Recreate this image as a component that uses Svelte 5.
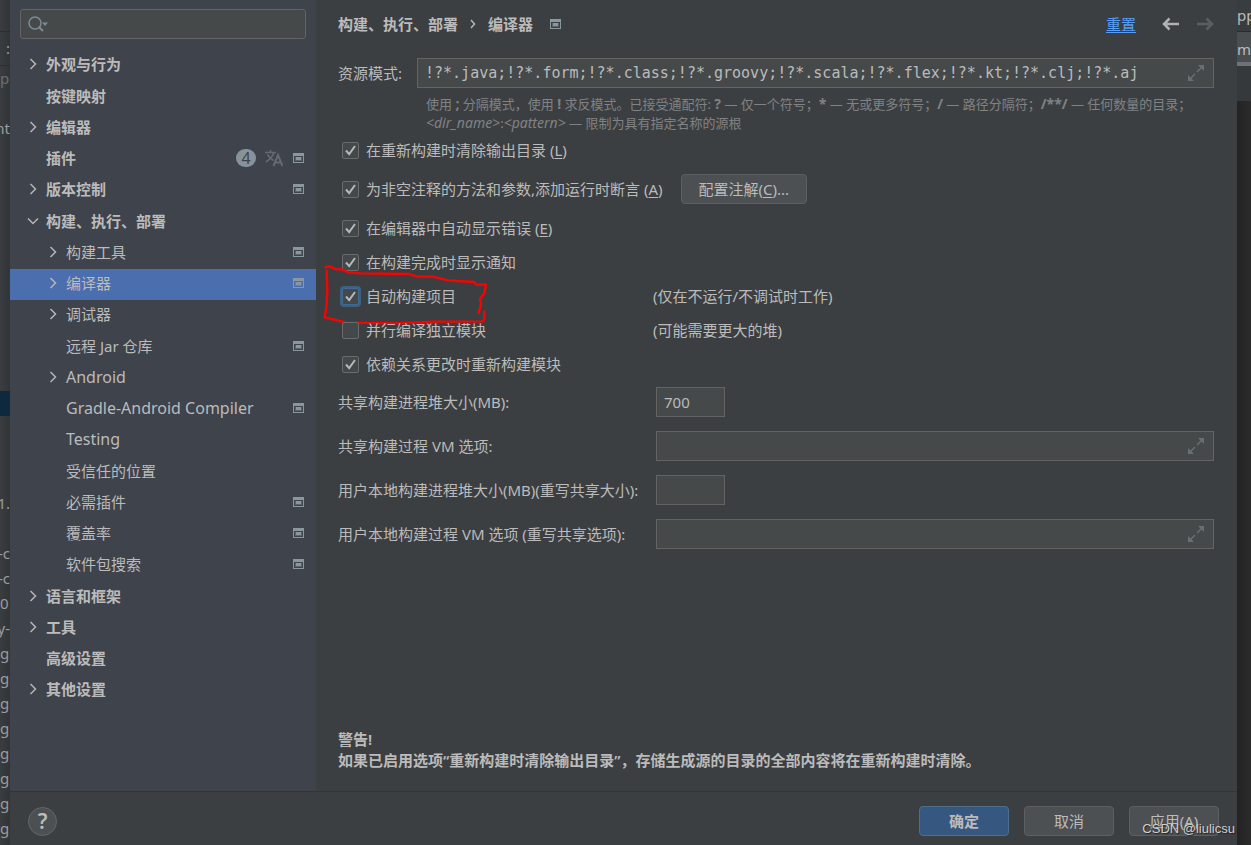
<script lang="ts">
	interface TreeItem {
		label: string;
		level?: number;
		arrow?: 'right' | 'down';
		project?: boolean;
		updates?: number;
		latin?: boolean;
	}

	const tree: TreeItem[] = [
		{ label: '外观与行为', arrow: 'right' },
		{ label: '按键映射' },
		{ label: '编辑器', arrow: 'right' },
		{ label: '插件', project: true, updates: 4 },
		{ label: '版本控制', arrow: 'right', project: true },
		{ label: '构建、执行、部署', arrow: 'down' },
		{ label: '构建工具', level: 1, arrow: 'right', project: true },
		{ label: '编译器', level: 1, arrow: 'right', project: true },
		{ label: '调试器', level: 1, arrow: 'right' },
		{ label: '远程 Jar 仓库', level: 1, project: true },
		{ label: 'Android', level: 1, arrow: 'right', latin: true },
		{ label: 'Gradle-Android Compiler', level: 1, project: true, latin: true },
		{ label: 'Testing', level: 1, latin: true },
		{ label: '受信任的位置', level: 1 },
		{ label: '必需插件', level: 1, project: true },
		{ label: '覆盖率', level: 1, project: true },
		{ label: '软件包搜索', level: 1, project: true },
		{ label: '语言和框架', arrow: 'right' },
		{ label: '工具', arrow: 'right' },
		{ label: '高级设置' },
		{ label: '其他设置', arrow: 'right' }
	];

	let selected = $state('编译器');

	let options = $state([
		{ id: 'clear-output', label: '在重新构建时清除输出目录', key: 'L', checked: true },
		{ id: 'assertions', label: '为非空注释的方法和参数,添加运行时断言', key: 'A', checked: true, configure: true },
		{ id: 'show-errors', label: '在编辑器中自动显示错误', key: 'E', checked: true },
		{ id: 'notify', label: '在构建完成时显示通知', checked: true },
		{ id: 'auto-build', label: '自动构建项目', checked: true, focused: true, note: '(仅在不运行/不调试时工作)' },
		{ id: 'parallel', label: '并行编译独立模块', checked: false, note: '(可能需要更大的堆)' },
		{ id: 'rebuild-deps', label: '依赖关系更改时重新构建模块', checked: true }
	]);

	let fields = $state([
		{ id: 'shared-heap', label: '共享构建进程堆大小(MB):', value: '700', wide: false },
		{ id: 'shared-vm', label: '共享构建过程 VM 选项:', value: '', wide: true },
		{ id: 'user-heap', label: '用户本地构建进程堆大小(MB)(重写共享大小):', value: '', wide: false },
		{ id: 'user-vm', label: '用户本地构建过程 VM 选项 (重写共享选项):', value: '', wide: true }
	]);

	let patterns = $state(
		'!?*.java;!?*.form;!?*.class;!?*.groovy;!?*.scala;!?*.flex;!?*.kt;!?*.clj;!?*.aj'
	);

	// Ends of the editor lines that stick out left of the dialog
	const editorLines = [
		'pl', '', 'nt', '', '', '', '', '', '', '', '', '', '', '', '', '', '', '1.', '',
		'-c', '-c', '0', 'y-', 'g', 'g', 'g', 'g', 'g', 'g', 'g', 'g'
	];
	const currentLine = 13;
</script>

{#snippet projectIcon()}
	<svg class="project-icon" width="11" height="10" viewBox="0 0 11 10">
		<path d="M0 0h11v10H0zM1 3v6h9V3z" fill="currentColor" fill-rule="evenodd" />
		<rect x="2" y="4" width="7" height="4" fill="currentColor" opacity="0.4" />
		<rect x="3" y="4" width="5" height="3" fill="currentColor" />
	</svg>
{/snippet}

{#snippet expandButton()}
	<button class="expand" aria-label="展开">
		<svg width="16" height="16" viewBox="0 0 16 16">
			<path d="M10 0h6v6zM0 10v6h6z" fill="currentColor" />
			<path d="M9 7l5-5M7 9l-5 5" stroke="currentColor" stroke-width="1.500" />
		</svg>
	</button>
{/snippet}

<div class="screen">
	<div class="editor-left">
		<div class="toolbar-edge"></div>
		<div class="tab-edge">:</div>
		{#each editorLines as line, i}
			<div
				class="code-line"
				class:current={i === currentLine}
				class:dim={i === 0}
				class:start={line.length === 1 || i === 0}
			>
				{line}
			</div>
		{/each}
	</div>

	<div class="dialog">
		<div class="body">
			<aside class="sidebar">
				<div class="search">
					<svg width="22" height="18" viewBox="0 0 22 18">
						<circle cx="8" cy="8" r="6" fill="none" stroke="currentColor" stroke-width="1.500" />
						<path d="M12 12l4 4" stroke="currentColor" stroke-width="2" />
						<path d="M15 7.500h6l-3 3.500z" fill="currentColor" />
					</svg>
					<input type="text" aria-label="搜索" />
				</div>

				<ul class="tree">
					{#each tree as item}
						<li>
							<button
								class="tree-row"
								class:child={item.level === 1}
								class:latin={item.latin}
								class:selected={item.label === selected}
								onclick={() => (selected = item.label)}
							>
								<svg class="chevron" width="14" height="14" viewBox="0 0 14 14">
									{#if item.arrow === 'right'}
										<path d="M4.500 2L9.500 7l-5 5" />
									{:else if item.arrow === 'down'}
										<path d="M2 4.500L7 9.500l5-5" />
									{/if}
								</svg>
								<span class="tree-label">{item.label}</span>
								{#if item.updates}
									<span class="badge">{item.updates}</span>
									<svg class="translate" width="18" height="18" viewBox="0 0 18 18">
										<path d="M0 3.500h11M5.500 1v2.500M9 3.500C8 7.500 4.500 10.500 1 13M2.500 5.500C4 8 6 10 8.500 11.500" />
										<path d="M8.500 17L13 6l4.500 11M10 13.500h6" stroke-width="2" />
									</svg>
								{/if}
								{#if item.project}
									{@render projectIcon()}
								{/if}
							</button>
						</li>
					{/each}
				</ul>
			</aside>

			<main class="content">
				<header class="header">
					<h1>构建、执行、部署</h1>
					<svg class="crumb" width="6" height="10" viewBox="0 0 6 10">
						<path d="M1 1l3.500 4L1 9" />
					</svg>
					<h1>编译器</h1>
					<span class="header-icon">{@render projectIcon()}</span>
					<a class="reset" href="#reset">重置</a>
					<button class="nav-button" aria-label="后退">
						<svg width="18" height="14" viewBox="0 0 18 14">
							<path d="M17 7H2M7.500 1.500L2 7l5.500 5.500" />
						</svg>
					</button>
					<button class="nav-button" aria-label="前进" disabled>
						<svg width="18" height="14" viewBox="0 0 18 14">
							<path d="M1 7h15M10.500 1.500L16 7l-5.500 5.500" />
						</svg>
					</button>
				</header>

				<div class="pattern-row">
					<label for="patterns">资源模式:</label>
					<div class="field">
						<input id="patterns" class="mono" type="text" bind:value={patterns} />
						{@render expandButton()}
					</div>
				</div>
				<p class="hint">
					使用 <b>;</b> 分隔模式，使用 <b>!</b> 求反模式。已接受通配符: <b>?</b> — 仅一个符号；<b>*</b> — 无或更多符号；<b>/</b> — 路径分隔符；<b>/**/</b> — 任何数量的目录；<br />
					<i>&lt;dir_name&gt;</i>:<i>&lt;pattern&gt;</i> — 限制为具有指定名称的源根
				</p>

				<div class="options">
					{#each options as option}
						<div class="option" class:tall={option.configure}>
							<label class="check" class:focused={option.focused}>
								<input type="checkbox" bind:checked={option.checked} />
								<span class="box">
									{#if option.checked}
										<svg width="13" height="13" viewBox="0 0 13 13">
											<path d="M2 6.500l3.200 3.700L11 2" />
										</svg>
									{/if}
								</span>
								<span>{option.label}{#if option.key}&nbsp;(<u>{option.key}</u>){/if}</span>
							</label>
							{#if option.configure}
								<button class="btn btn-configure"><span>配置注解(<u>C</u>)...</span></button>
							{/if}
							{#if option.note}
								<span class="note">{option.note}</span>
							{/if}
							{#if option.focused}
								<svg class="marker" width="170" height="64" viewBox="0 171 510 192">
									<path d="M16 187L29 184 48 193 64 193 85 202 120 205 268 207 290 215 335 214 385 226 462 231 468 239 498 238 493 264 480 281 483 298 476 324M493 320L493 343 488 349 340 350 230 355 80 353 14 337 20 300 22 255 20 197" />
								</svg>
							{/if}
						</div>
					{/each}
				</div>

				<div class="form">
					{#each fields as field}
						<label for={field.id}>{field.label}</label>
						<div class="field" class:short={!field.wide}>
							<input id={field.id} type="text" bind:value={field.value} />
							{#if field.wide}
								{@render expandButton()}
							{/if}
						</div>
					{/each}
				</div>

				<div class="warning">
					<div>警告!</div>
					<div>如果已启用选项“重新构建时清除输出目录”，存储生成源的目录的全部内容将在重新构建时清除。</div>
				</div>
			</main>
		</div>

		<footer class="footer">
			<button class="help" aria-label="帮助">?</button>
			<button class="btn btn-primary">确定</button>
			<button class="btn">取消</button>
			<button class="btn">应用(A)</button>
		</footer>
	</div>

	<div class="editor-right">
		<div class="run-edge">pp</div>
		<div class="file-tab">m</div>
		<div class="panel-edge"></div>
	</div>

	<div class="watermark">CSDN @liulicsu</div>
</div>

<style>
	:global(body) {
		margin: 0;
		background: #2b2b2b;
	}

	.screen {
		position: relative;
		display: grid;
		grid-template-columns: 10px minmax(0, 1fr) 14px;
		min-height: 100vh;
		overflow: hidden;
		font-family: 'Noto Sans', 'Noto Sans CJK SC', sans-serif;
		font-size: 15px;
		line-height: 22px;
		color: #bbbbbb;
	}

	button,
	input {
		box-sizing: border-box;
		margin: 0;
		padding: 0;
		border: none;
		outline: none;
		background: none;
		font: inherit;
		color: inherit;
	}

	svg {
		flex: none;
	}

	u {
		text-underline-offset: 2px;
	}

	/* Windows behind the dialog */
	.editor-left {
		overflow: hidden;
		background: linear-gradient(to right, #3a3d3f, #323537);
		color: #999c9e;
	}

	.toolbar-edge {
		height: 31px;
		border-bottom: 1px solid #2a2c2d;
	}

	.tab-edge {
		height: 33px;
		border-bottom: 1px solid #2a2c2d;
		line-height: 33px;
		text-align: right;
	}

	.code-line {
		display: flex;
		justify-content: flex-end;
		height: 25px;
		line-height: 25px;
		white-space: nowrap;
	}

	.code-line.start {
		justify-content: flex-start;
	}

	.code-line.dim {
		color: #6b6e70;
	}

	.code-line.current {
		background: #0d293e;
	}

	.editor-right {
		overflow: hidden;
		background: linear-gradient(to right, #232323, #2b2b2b);
	}

	.run-edge {
		height: 31px;
		border-bottom: 1px solid #292b2c;
		background: #3a3d3f;
		line-height: 30px;
	}

	.file-tab {
		height: 30px;
		border-bottom: 4px solid #6c7278;
		background: #4a4e50;
		line-height: 34px;
	}

	.panel-edge {
		height: 35px;
		background: #36393b;
	}

	/* Dialog */
	.dialog {
		display: flex;
		flex-direction: column;
		background: #3c3f41;
	}

	.body {
		flex: 1;
		display: flex;
	}

	.sidebar {
		flex: none;
		box-sizing: border-box;
		width: 306px;
		padding-top: 9px;
		background: #3f434c;
	}

	.search {
		display: flex;
		align-items: center;
		box-sizing: border-box;
		height: 30px;
		margin: 0 10px 11px;
		padding: 0 6px;
		border: 1px solid #646464;
		border-radius: 3px;
		background: #45494a;
		color: #7f8b91;
	}

	.search input {
		flex: 1;
		min-width: 0;
	}

	.tree {
		margin: 0;
		padding: 0;
		list-style: none;
	}

	.tree li {
		height: 31px;
	}

	.tree li:nth-child(4n + 1) {
		height: 32px;
	}

	.tree-row {
		display: flex;
		align-items: center;
		width: 100%;
		height: 100%;
		padding: 0 12px 4px 16px;
		font-weight: 600;
		text-align: left;
	}

	.tree-row.child {
		padding-left: 36px;
		font-weight: 400;
	}

	.tree-row.latin {
		font-size: 16px;
	}

	.tree-row.selected {
		background: #4b6eaf;
	}

	.chevron {
		margin-right: 6px;
	}

	.chevron path,
	.crumb path {
		fill: none;
		stroke: #b4b6b8;
		stroke-width: 1.5;
	}

	.tree-label {
		flex: 1;
	}

	.project-icon {
		color: #8b979f;
	}

	.badge {
		width: 20px;
		height: 18px;
		border-radius: 9px;
		background: #87939a;
		color: #3f434c;
		font-size: 16px;
		font-weight: 400;
		line-height: 18px;
		text-align: center;
	}

	.translate {
		margin: 0 10px 0 9px;
		fill: none;
		stroke: #626a74;
		stroke-width: 1.6;
	}

	/* Settings page */
	.content {
		flex: 1;
		display: flex;
		flex-direction: column;
		min-width: 0;
		padding: 0 23px 20px 22px;
	}

	.header {
		display: flex;
		align-items: center;
		height: 48px;
	}

	h1 {
		margin: 0;
		font-size: 15px;
		font-weight: 600;
	}

	.crumb {
		margin: 0 12px;
	}

	.header-icon {
		display: flex;
		margin-left: 17px;
	}

	.reset {
		margin-left: auto;
		color: #589df6;
		text-underline-offset: 2px;
	}

	.nav-button {
		display: flex;
		margin-left: 26px;
	}

	.nav-button + .nav-button {
		margin-left: 16px;
	}

	.nav-button path {
		fill: none;
		stroke: #afb1b3;
		stroke-width: 2.5;
	}

	.nav-button:disabled path {
		stroke: #5c5f61;
	}

	.pattern-row {
		display: grid;
		grid-template-columns: 79px minmax(0, 1fr);
		align-items: center;
		margin-top: 10px;
	}

	.field {
		display: flex;
		align-items: center;
		box-sizing: border-box;
		height: 30px;
		border: 1px solid #646464;
		background: #45494a;
	}

	.field.short {
		width: 69px;
	}

	.field input {
		flex: 1;
		min-width: 0;
		height: 100%;
		padding: 0 7px;
	}

	.mono {
		font-family: 'DejaVu Sans Mono', monospace;
	}

	.expand {
		display: flex;
		margin-right: 9px;
		color: #686f73;
	}

	.hint {
		margin: 7px 0 0 88px;
		color: #808284;
		font-size: 13px;
		line-height: 19px;
	}

	.hint b,
	.hint i {
		font-size: 14px;
		line-height: 18px;
	}

	.options {
		display: flex;
		flex-direction: column;
		gap: 12px;
		margin-top: 6px;
	}

	.option {
		position: relative;
		display: flex;
		align-items: center;
		height: 22px;
	}

	.option.tall {
		height: 32px;
	}

	.check {
		display: flex;
		align-items: center;
		padding-left: 4px;
	}

	.check input {
		position: absolute;
		opacity: 0;
	}

	.box {
		display: grid;
		place-items: center;
		box-sizing: border-box;
		width: 17px;
		height: 17px;
		margin-right: 7px;
		border: 1px solid #6b6b6b;
		border-radius: 2px;
		background: #43494a;
	}

	.box path {
		fill: none;
		stroke: #b5b7b8;
		stroke-width: 2;
	}

	.focused .box {
		border-color: #43698e;
		box-shadow: 0 0 0 2px #3d6185;
	}

	.note {
		position: absolute;
		left: 315px;
	}

	.marker {
		position: absolute;
		left: -18px;
		top: -23px;
		pointer-events: none;
	}

	.marker path {
		fill: none;
		stroke: #ff0000;
		stroke-width: 7;
		stroke-linecap: round;
		stroke-linejoin: round;
	}

	.form {
		display: grid;
		grid-template-columns: 318px minmax(0, 1fr);
		align-items: center;
		row-gap: 14px;
		margin-top: 12px;
	}

	.warning {
		margin-top: auto;
		font-weight: 600;
		line-height: 21px;
	}

	.btn {
		width: 90px;
		height: 30px;
		border: 1px solid #5e6060;
		border-radius: 4px;
		background: #4c5052;
	}

	.btn-primary {
		border-color: #4c708c;
		background: #365880;
		font-weight: 600;
	}

	.btn-configure {
		width: auto;
		margin-left: 18px;
		padding: 0 17px;
	}

	.footer {
		display: flex;
		gap: 15px;
		align-items: center;
		box-sizing: border-box;
		height: 54px;
		padding: 5px 18px 0;
		border-top: 1px solid #323537;
	}

	.help {
		width: 29px;
		height: 29px;
		margin-right: auto;
		border: 1px solid #646668;
		border-radius: 50%;
		background: #4c5052;
		font-size: 21px;
		font-weight: 600;
		line-height: 21px;
	}

	.watermark {
		position: absolute;
		right: 16px;
		bottom: 5px;
		color: #d0d0d0;
		font-family: 'Liberation Sans', sans-serif;
		font-size: 13px;
		text-shadow: 1px 1px 1px #222222;
	}
</style>
